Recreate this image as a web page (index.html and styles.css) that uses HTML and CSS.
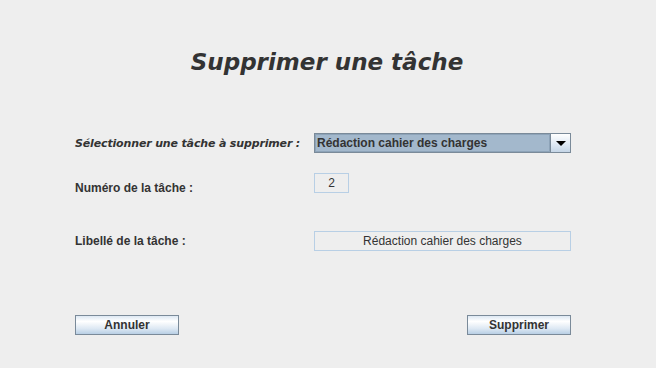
FILE: index.html
```html
<!DOCTYPE html>
<html lang="fr">
<head>
    <meta charset="UTF-8">
    <title>Supprimer une tâche</title>
    <link rel="stylesheet" href="styles.css">
</head>
<body>
    <main class="dialog">
        <h1 class="title">Supprimer une tâche</h1>

        <div class="form-row row-select">
            <label class="label label-em">Sélectionner une tâche à supprimer :</label>
            <div class="combo">
                <span class="combo-value">Rédaction cahier des charges</span>
                <span class="combo-arrow"><span class="arrow"></span></span>
            </div>
        </div>

        <div class="form-row row-num">
            <label class="label label-low">Numéro de la tâche :</label>
            <div class="field field-num">2</div>
        </div>

        <div class="form-row row-lib">
            <label class="label">Libellé de la tâche :</label>
            <div class="field field-wide">Rédaction cahier des charges</div>
        </div>

        <div class="actions">
            <button class="btn">Annuler</button>
            <button class="btn">Supprimer</button>
        </div>
    </main>
</body>
</html>
```

FILE: styles.css
```css
/* base */
* {
    margin: 0;
    padding: 0;
    box-sizing: border-box;
}

body {
    background: #eeeeee;
    font-family: 'Liberation Sans', Arial, sans-serif;
    font-size: 12px;
    color: #333333;
}

.dialog {
    width: 656px;
    height: 368px;
    padding: 0 85px 0 75px;
    display: flex;
    flex-direction: column;
}

/* titre */
.title {
    font-family: 'DejaVu Sans', Verdana, sans-serif;
    font-style: italic;
    font-weight: bold;
    font-size: 23px;
    line-height: 30px;
    text-align: center;
    color: #333333;
    margin-top: 47px;
    padding-left: 8px;
    height: 30px;
}

/* lignes du formulaire */
.form-row {
    display: flex;
    align-items: center;
    height: 20px;
}

.row-select {
    margin-top: 56px;
}

.row-num {
    margin-top: 20px;
}

.row-lib {
    margin-top: 38px;
}

.label {
    width: 239px;
    font-weight: bold;
    color: #333333;
}

.label-em {
    font-family: 'DejaVu Sans', Verdana, sans-serif;
    font-style: italic;
    font-size: 11px;
    letter-spacing: -0.15px;
}

.label-low {
    padding-top: 10px;
}

/* liste déroulante */
.combo {
    width: 257px;
    height: 20px;
    display: flex;
    border: 1px solid #7a8a99;
}

.combo-value {
    flex: 1;
    background: #a3b8cc;
    border: 1px solid #8da3b8;
    font-weight: bold;
    line-height: 16px;
    padding-left: 1px;
    color: #333333;
}

.combo-arrow {
    width: 20px;
    border-left: 1px solid #7a8a99;
    background: linear-gradient(#ffffff, #dde8f3 60%, #c4d5e6);
    display: flex;
    align-items: center;
    justify-content: center;
}

.arrow {
    width: 0;
    height: 0;
    border-left: 5px solid transparent;
    border-right: 5px solid transparent;
    border-top: 5px solid #000000;
    margin-top: 1px;
}

/* champs */
.field {
    height: 20px;
    border: 1px solid #b8cfe5;
    text-align: center;
    line-height: 18px;
    color: #333333;
}

.field-num {
    width: 35px;
}

.field-wide {
    width: 257px;
}

/* boutons */
.actions {
    display: flex;
    justify-content: space-between;
    margin-top: 64px;
}

.btn {
    width: 104px;
    height: 20px;
    border: 1px solid #7a8a99;
    background: linear-gradient(#dde8f3, #ffffff 30%, #dde8f3 70%, #b8cfe5);
    font-family: 'Liberation Sans', Arial, sans-serif;
    font-size: 12px;
    font-weight: bold;
    color: #333333;
}
```
